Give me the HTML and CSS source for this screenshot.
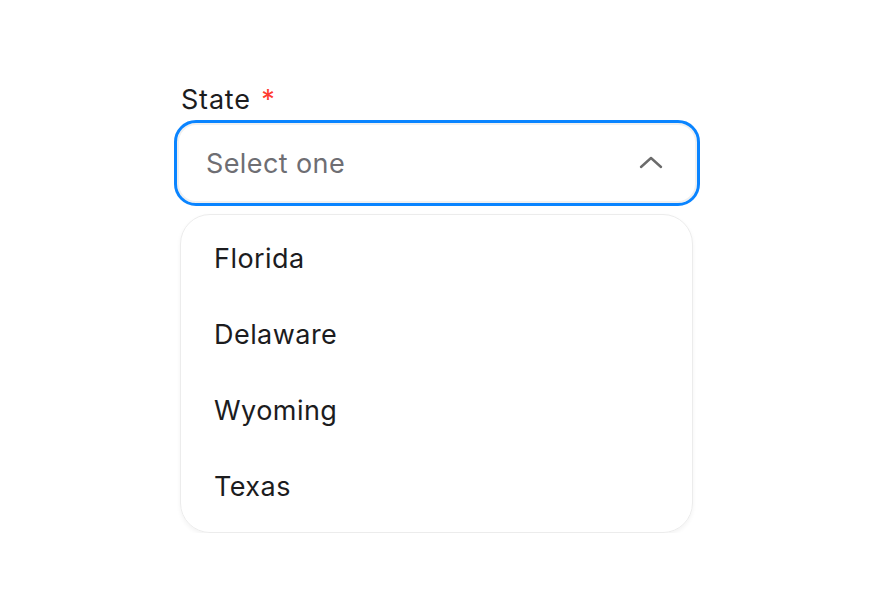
FILE: index.html
```html
<!DOCTYPE html>
<html lang="en">
<head>
<meta charset="utf-8">
<title>State select</title>
<link rel="stylesheet" href="styles.css">
</head>
<body>
<div class="field">
  <label class="label">State <span class="req">*</span></label>
  <div class="select">
    <span class="placeholder">Select one</span>
    <svg class="chev" width="26" height="16" viewBox="0 0 26 16"><path d="M3 13 L13 4 L23 13" fill="none" stroke="#6b6b6b" stroke-width="2.4" stroke-linecap="round" stroke-linejoin="round"/></svg>
  </div>
  <ul class="menu">
    <li class="opt">Florida</li>
    <li class="opt">Delaware</li>
    <li class="opt">Wyoming</li>
    <li class="opt">Texas</li>
  </ul>
</div>
</body>
</html>
```
FILE: styles.css
```css
html, body {
  margin: 0;
  padding: 0;
  background: #ffffff;
}
body {
  font-family: Inter, "Noto Sans", sans-serif;
  padding: 84px 0 0 174px;
}
.field {
  width: 526px;
  display: flex;
  flex-direction: column;
}
.label {
  font-size: 27px;
  line-height: 32px;
  letter-spacing: 0.8px;
  color: #1c1c1e;
  padding-left: 7px;
  margin-bottom: 4px;
}
.req {
  color: #ff3b30;
  margin-left: 2px;
}
.select {
  box-sizing: border-box;
  height: 86px;
  border: 3px solid #0a84ff;
  border-radius: 22px;
  box-shadow: inset 0 0 0 2px #f0f0f0;
  display: flex;
  align-items: center;
  justify-content: space-between;
  padding: 0 33px 0 29px;
}
.placeholder {
  font-size: 27px;
  letter-spacing: 0.4px;
  color: #6e6e73;
}
.chev {
  display: block;
  margin-top: -2px;
}
.menu {
  list-style: none;
  margin: 8px 0 0 6px;
  padding: 5px 0 8px;
  width: 513px;
  box-sizing: border-box;
  border: 1px solid #ececec;
  border-radius: 30px;
  box-shadow: 0 2px 4px rgba(0,0,0,0.05);
}
.opt {
  height: 76px;
  display: flex;
  align-items: center;
  padding-left: 33px;
  font-size: 27px;
  letter-spacing: 0.45px;
  color: #1c1c1e;
}
```
